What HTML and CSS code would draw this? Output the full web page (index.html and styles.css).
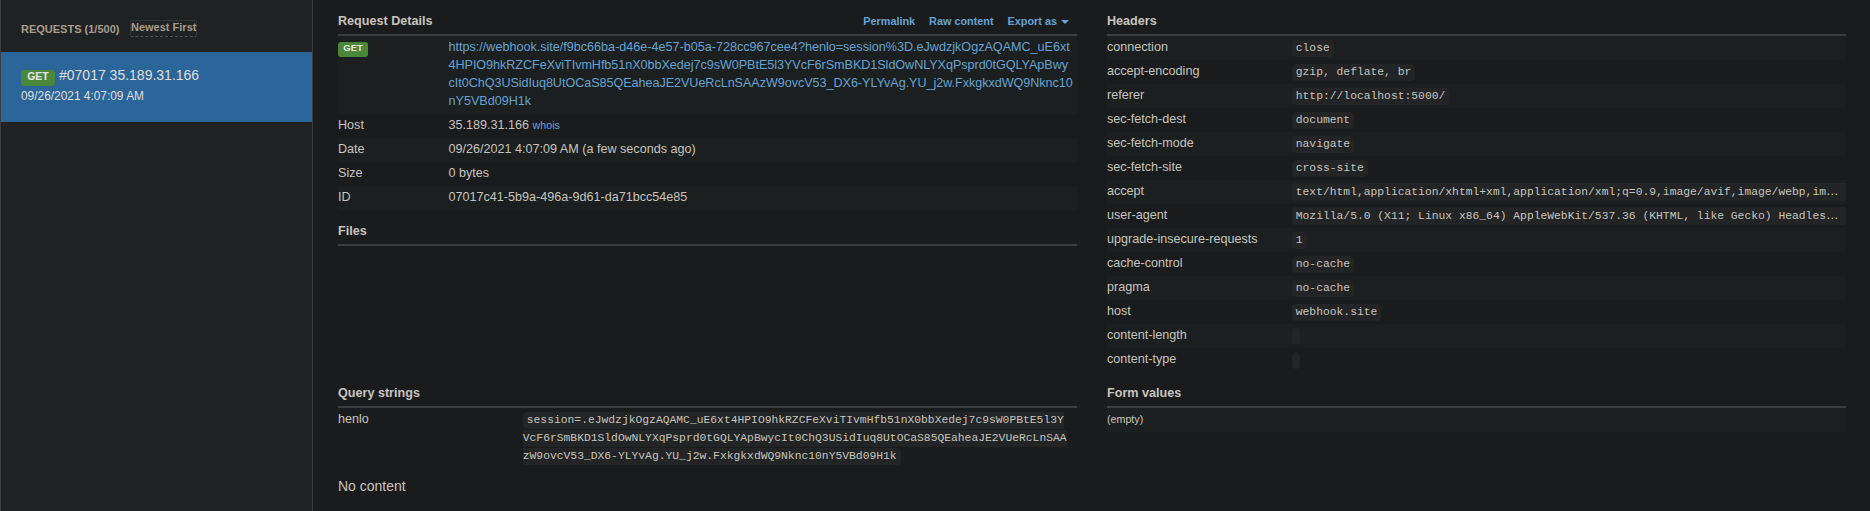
FILE: index.html
```html
<!DOCTYPE html>
<html lang="en">
<head>
<meta charset="utf-8">
<title>Webhook.site</title>
<link rel="stylesheet" href="styles.css">
</head>
<body>
<div class="app">
  <aside class="sidebar">
    <div class="sidebar-head">
      <span class="sidebar-title">REQUESTS (1/500)</span>
      <span class="sort">Newest First</span>
    </div>
    <a class="request">
      <div class="request-top"><span class="label label-lg">GET</span><span class="request-id">#07017 35.189.31.166</span></div>
      <small class="request-date">09/26/2021 4:07:09 AM</small>
    </a>
  </aside>
  <main class="content">
    <div class="columns top">
      <div class="column">
        <div class="heading"><h2>Request Details</h2>
          <nav class="actions"><a>Permalink</a><a>Raw content</a><a>Export as <span class="caret"></span></a></nav>
        </div>
        <dl class="rows details">
          <div class="row"><dt><span class="label">GET</span></dt><dd><a>https://webhook.site/f9bc66ba-d46e-4e57-b05a-728cc967cee4?henlo=session%3D.eJwdzjkOgzAQAMC_uE6xt<br><span class="tight">4HPIO9hkRZCFeXviTIvmHfb51nX0bbXedej7c9sW0PBtE5l3YVcF6rSmBKD1SldOwNLYXqPsprd0tGQLYApBwy<br>cIt0ChQ3USidIuq8UtOCaS85QEaheaJE2VUeRcLnSAAzW9ovcV53_DX6-YLYvAg.YU_j2w.FxkgkxdWQ9Nknc10</span><br>nY5VBd09H1k</a></dd></div>
          <div class="row"><dt>Host</dt><dd>35.189.31.166 <a class="small">whois</a></dd></div>
          <div class="row"><dt>Date</dt><dd>09/26/2021 4:07:09 AM (a few seconds ago)</dd></div>
          <div class="row"><dt>Size</dt><dd>0 bytes</dd></div>
          <div class="row"><dt>ID</dt><dd>07017c41-5b9a-496a-9d61-da71bcc54e85</dd></div>
        </dl>
        <div class="heading"><h2>Files</h2></div>
      </div>
      <div class="column">
        <div class="heading"><h2>Headers</h2></div>
        <dl class="rows">
          <div class="row"><dt>connection</dt><dd><code>close</code></dd></div>
          <div class="row"><dt>accept-encoding</dt><dd><code>gzip, deflate, br</code></dd></div>
          <div class="row"><dt>referer</dt><dd><code>http://localhost:5000/</code></dd></div>
          <div class="row"><dt>sec-fetch-dest</dt><dd><code>document</code></dd></div>
          <div class="row"><dt>sec-fetch-mode</dt><dd><code>navigate</code></dd></div>
          <div class="row"><dt>sec-fetch-site</dt><dd><code>cross-site</code></dd></div>
          <div class="row"><dt>accept</dt><dd><code class="long">text/html,application/xhtml+xml,application/xml;q=0.9,image/avif,image/webp,im<span class="more">…</span></code></dd></div>
          <div class="row"><dt>user-agent</dt><dd><code class="long">Mozilla/5.0 (X11; Linux x86_64) AppleWebKit/537.36 (KHTML, like Gecko) Headles<span class="more">…</span></code></dd></div>
          <div class="row"><dt>upgrade-insecure-requests</dt><dd><code>1</code></dd></div>
          <div class="row"><dt>cache-control</dt><dd><code>no-cache</code></dd></div>
          <div class="row"><dt>pragma</dt><dd><code>no-cache</code></dd></div>
          <div class="row"><dt>host</dt><dd><code>webhook.site</code></dd></div>
          <div class="row"><dt>content-length</dt><dd><code></code></dd></div>
          <div class="row"><dt>content-type</dt><dd><code></code></dd></div>
        </dl>
      </div>
    </div>
    <div class="columns">
      <div class="column">
        <div class="heading"><h2>Query strings</h2></div>
        <dl class="rows plain">
          <div class="row"><dt>henlo</dt><dd><code>session=.eJwdzjkOgzAQAMC_uE6xt4HPIO9hkRZCFeXviTIvmHfb51nX0bbXedej7c9sW0PBtE5l3Y<br>VcF6rSmBKD1SldOwNLYXqPsprd0tGQLYApBwycIt0ChQ3USidIuq8UtOCaS85QEaheaJE2VUeRcLnSAA<br>zW9ovcV53_DX6-YLYvAg.YU_j2w.FxkgkxdWQ9Nknc10nY5VBd09H1k</code></dd></div>
        </dl>
      </div>
      <div class="column">
        <div class="heading"><h2>Form values</h2></div>
        <dl class="rows"><div class="row"><dt class="small">(empty)</dt></div></dl>
      </div>
    </div>
    <p class="empty">No content</p>
  </main>
</div>
</body>
</html>
```
FILE: styles.css
```css
* { box-sizing: border-box; }
body {
  margin: 0;
  height: 511px;
  overflow: hidden;
  background: #1a1b1d;
  color: #c8c4bd;
  font: 14px/20px "Liberation Sans", Arial, sans-serif;
}
.app { display: flex; height: 511px; }

/* Request list */
.sidebar {
  width: 313px;
  flex: none;
  background: #1f2122;
  border: solid #3d3e40;
  border-width: 0 1px;
}
.sidebar-head {
  display: flex;
  align-items: flex-start;
  height: 52px;
  padding: 20px 0 0 20px;
  font-size: 11px;
  font-weight: bold;
  line-height: 16px;
  color: #a69d90;
}
.sidebar-title { width: 109px; padding-top: 1px; white-space: nowrap; }
.sort {
  width: 67px;
  height: 17px;
  line-height: 13px;
  white-space: nowrap;
  border: 1px solid #343739;
  border-bottom: 1px dashed #505355;
  border-radius: 2px;
}
.request {
  display: block;
  height: 70px;
  padding: 13px 20px 0 20px;
  background: #2a6699;
  color: #e0ded9;
}
.request-top { display: flex; align-items: flex-start; height: 22px; }
.request-id { margin-left: 4px; line-height: 20px; }
.request-date { display: block; font-size: 11.9px; line-height: 18px; }
.label {
  display: block;
  width: 30px;
  height: 15px;
  margin-top: 4px;
  border-radius: 3px;
  background: #4b873a;
  color: #e8e6e3;
  font-size: 9.45px;
  font-weight: bold;
  line-height: 12px;
  text-align: center;
}
.label-lg { width: 34px; height: 16px; margin-top: 5px; font-size: 10.5px; line-height: 13px; }

/* Request data */
.content { flex: 1; padding: 0 24px 0 25px; }
.columns { display: grid; grid-template-columns: 739px 739px; column-gap: 30px; }
.top { height: 372px; }
.heading {
  display: flex;
  justify-content: space-between;
  height: 36px;
  padding-top: 12px;
  border-bottom: 2px solid #3c3d40;
  line-height: 18px;
}
.columns h2 { margin: 0; font-size: 12.6px; }
.actions { display: flex; gap: 14px; padding-right: 8px; font-size: 10.85px; font-weight: bold; }
.actions a, .rows a { color: #66a3d4; }
.caret {
  display: inline-block;
  margin-left: 1px;
  border: 4px solid transparent;
  border-top-color: currentColor;
  border-bottom: 0;
  vertical-align: middle;
}
.rows { margin: 0; font-size: 12.6px; line-height: 18px; }
.row { display: grid; grid-template-columns: 184.75px 1fr; height: 24px; }
.details .row { grid-template-columns: 110.5px 1fr; height: auto; }
.row:nth-child(odd) { background: #1b1f1f; }
.plain .row { background: none; height: auto; }
.row dt { padding: 2px 0 4px; white-space: nowrap; }
.row dd { margin: 0; padding: 2px 0 4px; white-space: nowrap; }
.tight { letter-spacing: -0.04px; }
code {
  padding: 2px 4px 3px;
  border-radius: 4px;
  background: #222426;
  font-family: "Liberation Mono", monospace;
  font-size: 11.34px;
  line-height: 1;
}
.long {
  display: block;
  height: 18px;
  margin-top: 1px;
  padding: 0 4px;
  border-radius: 4px 0 0 4px;
  line-height: 18px;
}
.more { font: 12.6px/1 "Liberation Sans", Arial, sans-serif; }
.rows .small { font-size: 10.7px; }
.empty { margin: 8px 0 0; }
```
